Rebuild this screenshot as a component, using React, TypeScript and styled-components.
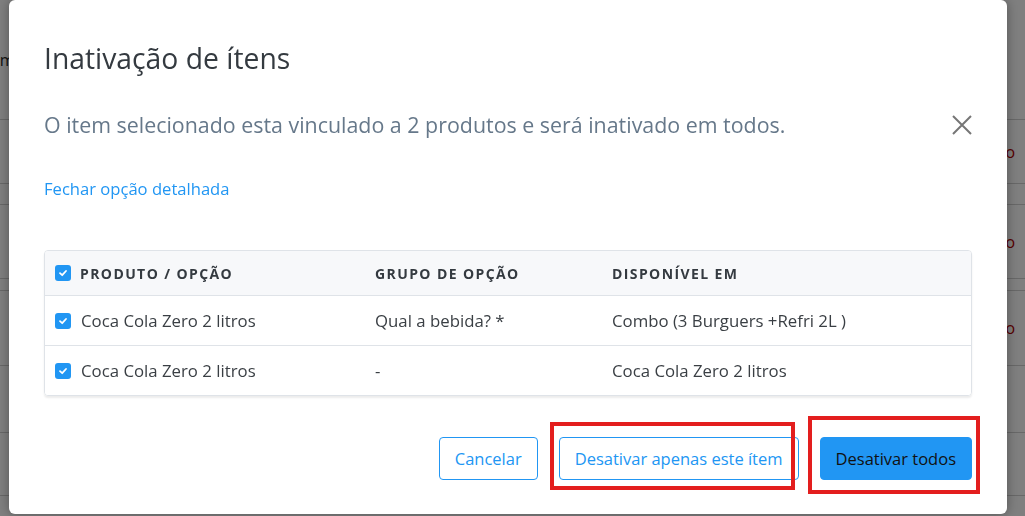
import React from 'react';
import styled, { createGlobalStyle } from 'styled-components';

const GlobalStyle = createGlobalStyle`
  html, body {
    margin: 0;
    padding: 0;
    height: 100%;
    overflow: hidden;
  }
  body {
    font-family: "Open Sans", "Noto Sans", Arial, sans-serif;
    background: #fff;
  }
`;

const BLUE = '#2196f3';

// page behind the dialog
const Page = styled.div`
  display: flex;
  flex-direction: column;
`;

const BgRow = styled.div<{ $h: number }>`
  height: ${({ $h }) => $h}px;
  border-bottom: 1px solid #d0d0d0;
  display: flex;
  align-items: center;
  justify-content: space-between;
  padding: 0 10px 0 0;
  box-sizing: border-box;
  font-size: 16px;
  color: #222;
`;

const BgLeft = styled.span`
  margin-left: -22px;
`;

const BgStatus = styled.span`
  color: #b00000;
`;

const Overlay = styled.div`
  position: fixed;
  inset: 0;
  background: rgba(0, 0, 0, 0.5);
  display: flex;
  align-items: flex-start;
  padding: 0 0 0 9px;
`;

const Modal = styled.div`
  width: 998px;
  height: 514px;
  background: #fff;
  border-radius: 6px;
  box-shadow: 0 0 12px rgba(0, 0, 0, 0.35);
  box-sizing: border-box;
  padding: 38px 35px 0 35px;
  display: flex;
  flex-direction: column;
`;

const Title = styled.h2`
  margin: 0;
  font-size: 28.3px;
  font-weight: 400;
  line-height: 40px;
  color: #343a40;
`;

const SubRow = styled.div`
  margin-top: 32px;
  display: flex;
  align-items: center;
  justify-content: space-between;
`;

const Subtitle = styled.p`
  margin: 0;
  font-size: 21.4px;
  line-height: 30px;
  color: #66788a;
`;

const CloseButton = styled.button`
  border: 0;
  background: none;
  padding: 0;
  width: 20px;
  height: 20px;
  display: flex;
  cursor: pointer;
`;

const DetailLink = styled.a`
  margin-top: 37px;
  font-size: 16.6px;
  line-height: 24px;
  color: ${BLUE};
  text-decoration: none;
  align-self: flex-start;
`;

const Table = styled.div`
  margin-top: 49px;
  border: 1px solid #dfe3e8;
  border-radius: 4px;
  box-shadow: 0 2px 2px rgba(0, 0, 0, 0.08);
  overflow: hidden;
`;

const Row = styled.div<{ $head?: boolean }>`
  display: grid;
  grid-template-columns: 320px 237px 1fr;
  align-items: center;
  height: ${({ $head }) => ($head ? 44 : 49)}px;
  padding: 0 10px;
  background: ${({ $head }) => ($head ? '#f7f8fa' : '#fff')};
  border-top: ${({ $head }) => ($head ? '0' : '1px solid #dfe3e8')};
  font-size: ${({ $head }) => ($head ? 14 : 16.8)}px;
  font-weight: ${({ $head }) => ($head ? 700 : 400)};
  letter-spacing: ${({ $head }) => ($head ? '1.4px' : '0')};
  color: ${({ $head }) => ($head ? '#343a40' : '#3a3f44')};
`;

const Cell = styled.div<{ $gap?: number }>`
  display: flex;
  align-items: center;
  gap: ${({ $gap }) => $gap ?? 10}px;
  white-space: nowrap;
`;

const Check = styled.span`
  width: 16px;
  height: 16px;
  border-radius: 3px;
  background: ${BLUE};
  display: inline-flex;
  align-items: center;
  justify-content: center;
  flex: none;
`;

const Footer = styled.div`
  margin-top: 41px;
  display: flex;
  justify-content: flex-end;
  gap: 21px;
`;

const Button = styled.button<{ $primary?: boolean }>`
  height: 43px;
  padding: 0 15px;
  border-radius: 4px;
  border: 1px solid ${BLUE};
  background: ${({ $primary }) => ($primary ? BLUE : '#fff')};
  color: ${({ $primary }) => ($primary ? '#111' : BLUE)};
  font-family: inherit;
  font-size: 16.5px;
  cursor: pointer;
`;

const Highlight = styled.div<{ $l: number; $t: number; $r: number; $b: number }>`
  position: relative;
  display: flex;
  &::after {
    content: '';
    position: absolute;
    left: ${({ $l }) => $l}px;
    top: ${({ $t }) => $t}px;
    right: ${({ $r }) => $r}px;
    bottom: ${({ $b }) => $b}px;
    border: 4px solid #e31e1e;
    pointer-events: none;
  }
`;

const CheckIcon = () => (
  <Check>
    <svg width="10" height="10" viewBox="0 0 10 10">
      <path d="M2 5.2 L4.2 7.2 L8 3" fill="none" stroke="#fff" strokeWidth="1.8" strokeLinecap="round" strokeLinejoin="round" />
    </svg>
  </Check>
);

const rows = [
  { produto: 'Coca Cola Zero 2 litros', grupo: 'Qual a bebida? *', disponivel: 'Combo (3 Burguers +Refri 2L )' },
  { produto: 'Coca Cola Zero 2 litros', grupo: '-', disponivel: 'Coca Cola Zero 2 litros' },
];

const bgHeights = [120, 64, 21, 74, 12, 75, 67, 63, 40];

export default function App() {
  return (
    <>
      <GlobalStyle />
      <Page>
        {bgHeights.map((h, i) => (
          <BgRow key={i} $h={h}>
            <BgLeft>{i === 0 ? 'Nome' : ''}</BgLeft>
            <BgStatus>{i === 1 || i === 3 || i === 5 ? 'Inativo' : ''}</BgStatus>
          </BgRow>
        ))}
      </Page>
      <Overlay>
        <Modal role="dialog" aria-label="Inativação de ítens">
          <Title>Inativação de ítens</Title>
          <SubRow>
            <Subtitle>O item selecionado esta vinculado a 2 produtos e será inativado em todos.</Subtitle>
            <CloseButton aria-label="Fechar">
              <svg width="20" height="20" viewBox="0 0 20 20">
                <path d="M1 1 L19 19 M19 1 L1 19" stroke="#767676" strokeWidth="2" />
              </svg>
            </CloseButton>
          </SubRow>
          <DetailLink href="#">Fechar opção detalhada</DetailLink>
          <Table>
            <Row $head>
              <Cell $gap={9}>
                <CheckIcon />
                PRODUTO / OPÇÃO
              </Cell>
              <Cell>GRUPO DE OPÇÃO</Cell>
              <Cell>DISPONÍVEL EM</Cell>
            </Row>
            {rows.map((r, i) => (
              <Row key={i}>
                <Cell>
                  <CheckIcon />
                  {r.produto}
                </Cell>
                <Cell>{r.grupo}</Cell>
                <Cell>{r.disponivel}</Cell>
              </Row>
            ))}
          </Table>
          <Footer>
            <Button>Cancelar</Button>
            <Highlight $l={-9} $t={-15} $r={4} $b={-10}>
              <Button>Desativar apenas este ítem</Button>
            </Highlight>
            <Highlight $l={-12} $t={-21} $r={-8} $b={-14}>
              <Button $primary>Desativar todos</Button>
            </Highlight>
          </Footer>
        </Modal>
      </Overlay>
    </>
  );
}
